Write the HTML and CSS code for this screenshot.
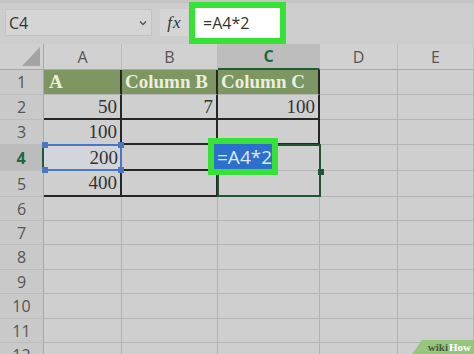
FILE: index.html
```html
<!DOCTYPE html>
<html>
<head>
<meta charset="utf-8">
<link rel="stylesheet" href="styles.css">
</head>
<body>
<div class="page">
  <div class="toolbar">
    <div class="namebox">
      <span class="nb-text">C4</span>
      <svg class="chev" width="8" height="6" viewBox="0 0 8 6"><path d="M1 1.5 L4 4.5 L7 1.5" fill="none" stroke="#555" stroke-width="1.4"/></svg>
    </div>
    <div class="fx"><i>f</i><i>x</i></div>
    <div class="formula-hl"><span>=A4*2</span></div>
  </div>

  <div class="sheet">
    <div class="corner"><svg width="18" height="19" viewBox="0 0 18 19"><polygon points="18,0 18,19 0,19" fill="#a3a3a3"/></svg></div>
    <div class="ch">A</div>
    <div class="ch">B</div>
    <div class="ch sel">C</div>
    <div class="ch">D</div>
    <div class="ch">E</div>

    <div class="rh">1</div>
    <div class="c hd br a1">A</div>
    <div class="c hd br">Column B</div>
    <div class="c hd br">Column C</div>
    <div class="c"></div>
    <div class="c"></div>

    <div class="rh">2</div>
    <div class="c num br bb">50</div>
    <div class="c num br bb">7</div>
    <div class="c num br bb">100</div>
    <div class="c"></div>
    <div class="c"></div>

    <div class="rh">3</div>
    <div class="c num br">100</div>
    <div class="c br bb"></div>
    <div class="c br bb"></div>
    <div class="c"></div>
    <div class="c"></div>

    <div class="rh sel">4</div>
    <div class="c num a4">200</div>
    <div class="c br bb"></div>
    <div class="c"></div>
    <div class="c"></div>
    <div class="c"></div>

    <div class="rh">5</div>
    <div class="c num br bb">400</div>
    <div class="c br bb"></div>
    <div class="c"></div>
    <div class="c"></div>
    <div class="c"></div>

    <div class="rh">6</div><div class="c"></div><div class="c"></div><div class="c"></div><div class="c"></div><div class="c"></div>
    <div class="rh">7</div><div class="c"></div><div class="c"></div><div class="c"></div><div class="c"></div><div class="c"></div>
    <div class="rh">8</div><div class="c"></div><div class="c"></div><div class="c"></div><div class="c"></div><div class="c"></div>
    <div class="rh">9</div><div class="c"></div><div class="c"></div><div class="c"></div><div class="c"></div><div class="c"></div>
    <div class="rh">10</div><div class="c"></div><div class="c"></div><div class="c"></div><div class="c"></div><div class="c"></div>
    <div class="rh">11</div><div class="c"></div><div class="c"></div><div class="c"></div><div class="c"></div><div class="c"></div>
    <div class="rh">12</div><div class="c"></div><div class="c"></div><div class="c"></div><div class="c"></div><div class="c"></div>
  </div>

  <div class="sel-a4">
    <span class="hdl tl"></span><span class="hdl tr"></span><span class="hdl bl"></span><span class="hdl br2"></span>
  </div>
  <div class="sel-c4"><span class="fill-handle"></span></div>
  <div class="edit-box"><span>=A4*2</span></div>

  <div class="badge"><span class="wiki">wiki</span><span class="how">How</span></div>
</div>
</body>
</html>
```

FILE: styles.css
```css
html, body {
  margin: 0;
  padding: 0;
}
body {
  width: 474px;
  height: 354px;
  overflow: hidden;
  background: #cfcfcf;
}
.page {
  position: relative;
  width: 474px;
  height: 354px;
  overflow: hidden;
}

/* toolbar */
.toolbar {
  height: 44px;
  box-sizing: border-box;
  background: #cdcdcd;
  border-top: 3px solid #c4c4c4;
  display: flex;
  align-items: flex-start;
  padding-left: 5px;
}
.namebox {
  width: 147px;
  height: 27px;
  margin-top: 6px;
  box-sizing: border-box;
  background: #d5d5d5;
  border: 1px solid #c4c4c4;
  display: flex;
  align-items: center;
  justify-content: space-between;
  padding: 0 4px 0 3px;
}
.nb-text {
  font: 16px "Open Sans", sans-serif;
  color: #333;
}
.chev {
  margin-top: 1px;
}
.fx {
  width: 28px;
  height: 27px;
  margin-top: 6px;
  margin-left: 8px;
  box-sizing: border-box;
  background: #d5d5d5;
  display: flex;
  align-items: center;
  justify-content: center;
  font: italic 17px "Liberation Serif", serif;
  color: #333;
}
.fx i:first-child {
  margin-right: 1px;
}
.formula-hl {
  margin-left: 1px;
  margin-top: -1px;
  width: 97px;
  height: 42px;
  box-sizing: border-box;
  border: 6px solid #36e236;
  background: #ffffff;
  display: flex;
  align-items: center;
  padding-left: 8px;
  font: 16px "Open Sans", sans-serif;
  color: #333;
}

/* sheet grid */
.sheet {
  display: grid;
  grid-template-columns: 44px 78px 96px 102px 78px 76px;
  grid-template-rows: 26px 25px 25px 25px 26px 26px 24px 24px 25px 24px 25px 24px 25px;
}
.corner {
  background: #d0d0d0;
  border-right: 1px solid #a8a8a8;
  border-bottom: 1px solid #a8a8a8;
  box-sizing: border-box;
  display: flex;
  align-items: flex-end;
  justify-content: flex-end;
  padding: 0 3px 3px 0;
}
.ch {
  background: #d1d1d1;
  border-right: 1px solid #bcbcbc;
  border-bottom: 1px solid #a8a8a8;
  box-sizing: border-box;
  display: flex;
  align-items: center;
  justify-content: center;
  font: 16px "Open Sans", sans-serif;
  color: #555;
}
.ch.sel {
  background: #bdbdbd;
  color: #1f6a3c;
  font-weight: 700;
  border-bottom: 2px solid #1e5a33;
}
.rh {
  background: #c9c9c9;
  border-right: 1px solid #a8a8a8;
  border-bottom: 1px solid #bcbcbc;
  box-sizing: border-box;
  display: flex;
  align-items: center;
  justify-content: center;
  font: 16px "Open Sans", sans-serif;
  color: #555;
}
.rh.sel {
  background: #bcbcbc;
  color: #1f6a3c;
  font-weight: 700;
  border-right: 2px solid #1e5a33;
}
.c {
  background: #cfcfcf;
  border-right: 1px solid #b4b4b4;
  border-bottom: 1px solid #b4b4b4;
  box-sizing: border-box;
  display: flex;
  align-items: center;
  padding: 0 3px;
  font: 19px "Liberation Serif", serif;
  color: #333;
  white-space: nowrap;
}
.num {
  justify-content: flex-end;
}
.hd {
  background: #7d9662;
  color: #e8efdb;
  font-weight: 700;
}
.a1 {
  padding-left: 5px;
}
.br {
  border-right: 2px solid #262626;
}
.bb {
  border-bottom: 2px solid #262626;
}
.a4 {
  background: #d3d5dd;
}

/* overlays */
.sel-a4 {
  position: absolute;
  left: 45px;
  top: 144px;
  width: 77px;
  height: 27px;
  box-sizing: border-box;
  border: 2px solid #4a77c4;
  border-left: none;
}
.hdl {
  position: absolute;
  width: 6px;
  height: 6px;
  background: #4a77c4;
}
.hdl.tl { left: -3px; top: -4px; }
.hdl.tr { right: -4px; top: -4px; }
.hdl.bl { left: -3px; bottom: -4px; }
.hdl.br2 { right: -4px; bottom: -4px; }

.sel-c4 {
  position: absolute;
  left: 217px;
  top: 144px;
  width: 104px;
  height: 53px;
  box-sizing: border-box;
  border: 2px solid #1e5631;
}
.fill-handle {
  position: absolute;
  right: -5px;
  top: 23px;
  width: 6px;
  height: 6px;
  background: #1e5631;
}
.edit-box {
  position: absolute;
  left: 208px;
  top: 138px;
  width: 70px;
  height: 37px;
  box-sizing: border-box;
  border: 6px solid #36e236;
  background: #2d6fcc;
  display: flex;
  align-items: center;
  padding-left: 3px;
  font: 19px "Open Sans", sans-serif;
  color: #dfe9fb;
  white-space: nowrap;
}

.badge {
  position: absolute;
  right: 0;
  bottom: 0;
  width: 62px;
  height: 14px;
  background: #96c57d;
  clip-path: polygon(10px 0, 100% 0, 100% 100%, 0 100%);
  display: flex;
  align-items: center;
  justify-content: flex-end;
  padding-right: 3px;
  box-sizing: border-box;
  font: bold 11px "Liberation Serif", serif;
}
.wiki {
  color: #48573e;
  margin-right: 1px;
}
.how {
  color: #ffffff;
}
```
